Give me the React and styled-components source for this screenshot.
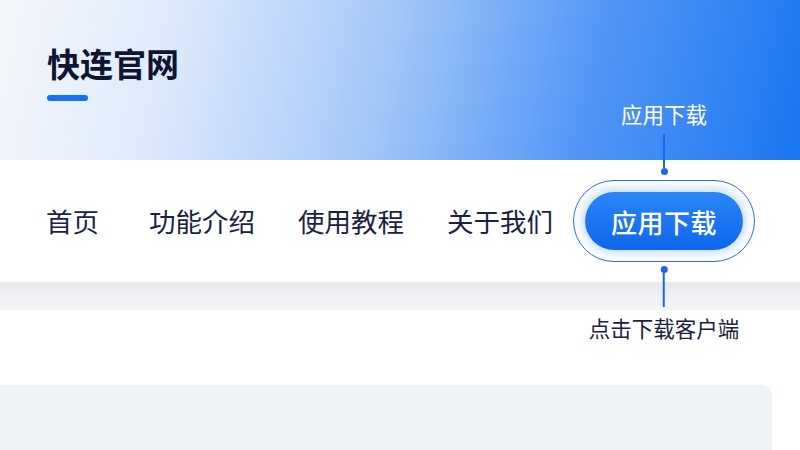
import React from 'react'
import styled, { createGlobalStyle } from 'styled-components'

const GlobalStyle = createGlobalStyle`
  html, body {
    margin: 0;
    padding: 0;
    background: #ffffff;
  }
  body {
    font-family: "Noto Sans CJK SC", "Noto Sans", sans-serif;
  }
`

const Page = styled.div`
  width: 800px;
  height: 450px;
  overflow: hidden;
  display: flex;
  flex-direction: column;
  background: #ffffff;
`

// Header
const Header = styled.header`
  height: 160px;
  flex-shrink: 0;
  box-sizing: border-box;
  padding: 39px 0 0 47px;
  background: linear-gradient(102deg, #f5f7fa 0%, #dde9fb 22%, #a3c7f8 48%, #5598f6 72%, #1a76f2 100%);
`

const Title = styled.h1`
  margin: 0;
  font-size: 33px;
  line-height: 48px;
  font-weight: 700;
  color: #0f1433;
`

const TitleBar = styled.div`
  width: 41px;
  height: 6px;
  margin-top: 8px;
  border-radius: 3px;
  background: #1272f3;
`

// Nav
const Nav = styled.nav`
  height: 122px;
  flex-shrink: 0;
  display: flex;
  align-items: center;
  box-sizing: border-box;
  padding-left: 46px;
  gap: 43px;
  background: #ffffff;
`

const NavLink = styled.a`
  font-size: 26.5px;
  line-height: 1;
  color: #1b2240;
  text-decoration: none;
  margin-right: ${p => (p.$wide ? '7px' : '0')};
  white-space: nowrap;
`

const ButtonWrap = styled.div`
  position: relative;
  margin-left: -23px;
`

const Ring = styled.div`
  width: 182px;
  height: 82px;
  box-sizing: border-box;
  border: 1.5px solid #2a6fe0;
  border-radius: 41px;
  display: flex;
  align-items: center;
  justify-content: center;
  background: #ffffff;
`

const DownloadButton = styled.button`
  width: 158px;
  height: 58px;
  border: none;
  border-radius: 29px;
  background: linear-gradient(180deg, #2a86f7 0%, #0e66ea 100%);
  box-shadow: 0 0 10px 3px rgba(40, 120, 240, 0.28);
  color: #ffffff;
  font-family: inherit;
  font-size: 26px;
  font-weight: 500;
  letter-spacing: 0.5px;
  cursor: pointer;
`

const Callout = styled.div`
  position: absolute;
  left: 50%;
  transform: translateX(-50%);
  display: flex;
  flex-direction: ${p => (p.$top ? 'column-reverse' : 'column')};
  align-items: center;
  ${p => (p.$top ? 'bottom: calc(100% + 5px);' : 'top: calc(100% + 4px);')}
`

const Dot = styled.span`
  width: 7px;
  height: 7px;
  border-radius: 50%;
  background: #1767e8;
`

const Stem = styled.span`
  width: 2px;
  height: ${p => p.$h}px;
  background: #1767e8;
`

const CalloutText = styled.span`
  font-size: 21.5px;
  line-height: 1;
  white-space: nowrap;
  color: ${p => (p.$light ? '#ffffff' : '#1b2240')};
  ${p => (p.$light ? 'margin-bottom: 10px;' : 'margin-top: 10px;')}
`

// Below
const ShadowBand = styled.div`
  height: 28px;
  flex-shrink: 0;
  background: linear-gradient(180deg, #e7e8ec 0%, #eff0f3 50%, #f4f5f7 100%);
`

const Spacer = styled.div`
  height: 75px;
  flex-shrink: 0;
`

const Panel = styled.div`
  flex: 1;
  width: 772px;
  border-radius: 0 10px 0 0;
  background: #eff2f6;
`

function App () {
  return (
    <>
      <GlobalStyle />
      <Page>
        <Header>
          <Title>快连官网</Title>
          <TitleBar />
        </Header>

        <Nav>
          <NavLink $wide>首页</NavLink>
          <NavLink>功能介绍</NavLink>
          <NavLink>使用教程</NavLink>
          <NavLink>关于我们</NavLink>
          <ButtonWrap>
            <Callout $top>
              <Dot />
              <Stem $h={34} />
              <CalloutText $light>应用下载</CalloutText>
            </Callout>
            <Ring>
              <DownloadButton>应用下载</DownloadButton>
            </Ring>
            <Callout>
              <Dot />
              <Stem $h={34} />
              <CalloutText>点击下载客户端</CalloutText>
            </Callout>
          </ButtonWrap>
        </Nav>

        <ShadowBand />
        <Spacer />
        <Panel />
      </Page>
    </>
  )
}

export default App
